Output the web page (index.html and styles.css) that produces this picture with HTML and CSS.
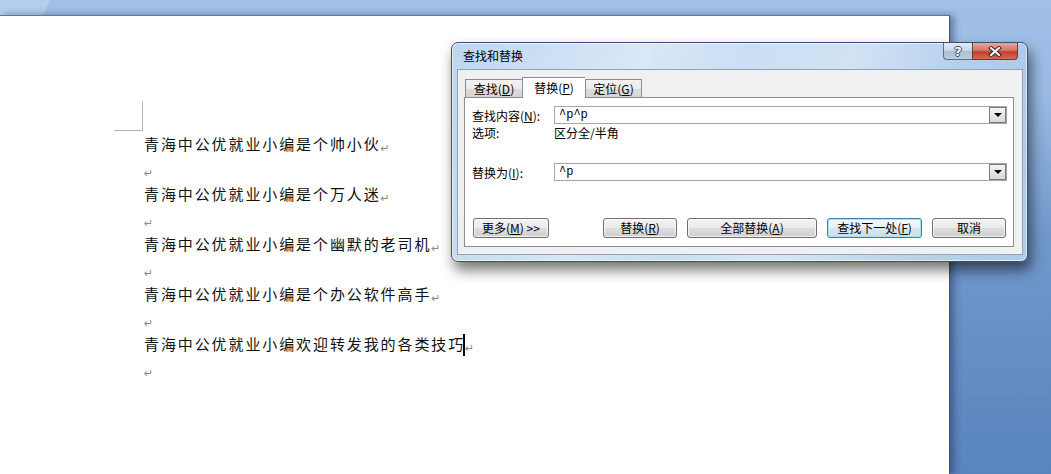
FILE: index.html
```html
<!DOCTYPE html>
<html lang="zh">
<head>
    <meta charset="UTF-8">
    <meta name="viewport" content="width=device-width, initial-scale=1.0">
    <title>查找和替换</title>
    <link rel="stylesheet" href="styles.css">
</head>
<body>
    <div class="page">
        <div class="corner"></div>
        <div class="doc">
            <div class="line">青海中公优就业小编是个帅小伙<span class="mark">↵</span></div>
            <div class="line"><span class="mark">↵</span></div>
            <div class="line">青海中公优就业小编是个万人迷<span class="mark">↵</span></div>
            <div class="line"><span class="mark">↵</span></div>
            <div class="line">青海中公优就业小编是个幽默的老司机<span class="mark">↵</span></div>
            <div class="line"><span class="mark">↵</span></div>
            <div class="line">青海中公优就业小编是个办公软件高手<span class="mark">↵</span></div>
            <div class="line"><span class="mark">↵</span></div>
            <div class="line">青海中公优就业小编欢迎转发我的各类技巧<span class="caret"></span><span class="mark">↵</span></div>
            <div class="line"><span class="mark">↵</span></div>
        </div>
    </div>

    <div class="dialog">
        <div class="titlebar">
            <div class="title">查找和替换</div>
            <div class="caption-btns">
                <div class="cap-btn help">?</div>
                <div class="cap-btn close">
                    <svg width="14" height="11" viewBox="0 0 14 11">
                        <path d="M3 2 L11 9 M11 2 L3 9" stroke="#3b2624" stroke-width="4" stroke-linecap="square"/>
                        <path d="M3 2 L11 9 M11 2 L3 9" stroke="#ffffff" stroke-width="2" stroke-linecap="square"/>
                    </svg>
                </div>
            </div>
        </div>
        <div class="client">
            <div class="tabs">
                <div class="tab">查找(<u>D</u>)</div>
                <div class="tab active">替换(<u>P</u>)</div>
                <div class="tab">定位(<u>G</u>)</div>
            </div>
            <div class="panel">
                <div class="field">
                    <div class="label">查找内容(<u>N</u>):</div>
                    <div class="combo"><span class="combo-text">^p^p</span><span class="drop"></span></div>
                </div>
                <div class="options">
                    <div class="label">选项:</div>
                    <div>区分全/半角</div>
                </div>
                <div class="field second">
                    <div class="label">替换为(<u>I</u>):</div>
                    <div class="combo"><span class="combo-text">^p</span><span class="drop"></span></div>
                </div>
                <div class="buttons">
                    <div class="btn more">更多(<u>M</u>) &gt;&gt;</div>
                    <div class="btn-group">
                        <div class="btn w74">替换(<u>R</u>)</div>
                        <div class="btn w130">全部替换(<u>A</u>)</div>
                        <div class="btn w95 focus">查找下一处(<u>F</u>)</div>
                        <div class="btn w74">取消</div>
                    </div>
                </div>
            </div>
        </div>
    </div>
</body>
</html>
```

FILE: styles.css
```css
body {
    margin: 0;
    width: 1051px;
    height: 474px;
    overflow: hidden;
    position: relative;
    font-family: "Noto Sans CJK SC", sans-serif;
    background:
        linear-gradient(115deg, rgba(255,255,255,0.22) 0, rgba(255,255,255,0.22) 45px, rgba(255,255,255,0) 46px),
        linear-gradient(to bottom, #a1c0e8 0, #9bbbe4 90px, #7299cb 230px, #5a84bd 474px);
}

.page {
    margin-top: 15px;
    width: 950px;
    height: 459px;
    box-sizing: border-box;
    background-color: #fff;
    border-top: 1px solid #66778d;
    border-right: 1px solid #4e5258;
    box-shadow: 4px 0 7px rgba(20,40,80,0.45);
    padding-top: 86px;
}

.corner {
    width: 28px;
    height: 28px;
    margin-left: 114px;
    border-right: 1px solid #b4b4b4;
    border-bottom: 1px solid #b4b4b4;
}

.doc {
    padding-left: 144px;
}

.line {
    height: 25px;
    line-height: 25px;
    font-size: 15px;
    letter-spacing: 1.9px;
    color: #111;
    white-space: nowrap;
}

.mark {
    font-family: "DejaVu Sans", sans-serif;
    font-size: 11px;
    color: #8a8a8a;
    letter-spacing: 0;
    vertical-align: -2px;
}

.caret {
    display: inline-block;
    width: 2px;
    height: 22px;
    background-color: #000;
    vertical-align: -6px;
    margin-left: -2px;
}

/* dialog window */
.dialog {
    position: absolute;
    left: 451px;
    top: 42px;
    width: 577px;
    height: 220px;
    box-sizing: border-box;
    border: 1px solid #3d4e66;
    border-radius: 7px;
    padding: 0 4px 6px 5px;
    display: flex;
    flex-direction: column;
    background:
        linear-gradient(110deg, rgba(255,255,255,0) 0, rgba(255,255,255,0.35) 30%, rgba(255,255,255,0.05) 45%, rgba(255,255,255,0.3) 62%, rgba(255,255,255,0) 80%),
        linear-gradient(to right, #bed6f0 0, #c9ddf3 50%, #aecbea 100%);
    box-shadow: inset 0 0 0 1px rgba(255,255,255,0.6), 3px 8px 14px rgba(0,0,0,0.55);
    font-size: 12px;
    color: #000;
}

.titlebar {
    height: 26px;
    display: flex;
    align-items: flex-start;
}

.title {
    padding-left: 6px;
    line-height: 26px;
    font-size: 12px;
}

.caption-btns {
    margin-left: auto;
    margin-right: 5px;
    display: flex;
}

.cap-btn {
    height: 17px;
    box-sizing: border-box;
    border: 1px solid #5f6f86;
    border-top: none;
    display: flex;
    align-items: center;
    justify-content: center;
}

.help {
    width: 29px;
    border-right: none;
    border-radius: 0 0 0 4px;
    background: linear-gradient(to bottom, #e2ebf6 0, #c9d8ea 45%, #a9bdd6 55%, #bfd0e4 100%);
    color: #fff;
    font-family: "DejaVu Sans", sans-serif;
    font-weight: bold;
    font-size: 13px;
    text-shadow: 1px 0 0 #3a4a5e, -1px 0 0 #3a4a5e, 0 1px 0 #3a4a5e, 0 -1px 0 #3a4a5e;
}

.close {
    width: 46px;
    border-radius: 0 0 4px 0;
    background: linear-gradient(to bottom, #e8a899 0, #d47a68 45%, #c23e27 55%, #d36b57 100%);
    border-color: #6b3a34;
}

.client {
    flex: 1;
    border: 1px solid #8ea3bc;
    background-color: #f0f0f0;
    padding: 7px 8px 7px 6px;
    display: flex;
    flex-direction: column;
}

.tabs {
    height: 20px;
    display: flex;
    align-items: flex-end;
    padding-left: 1px;
}

.tab {
    width: 57px;
    height: 18px;
    box-sizing: border-box;
    border: 1px solid #898c95;
    border-bottom: none;
    border-right: none;
    background: linear-gradient(to bottom, #f3f3f3 0, #ebebeb 50%, #dcdcdc 51%, #d6d6d6 100%);
    text-align: center;
    line-height: 17px;
}

.tab:last-child {
    border-right: 1px solid #898c95;
}

.tab.active {
    width: 63px;
    height: 21px;
    margin-bottom: -1px;
    background: #fff;
    position: relative;
    z-index: 1;
    line-height: 19px;
}

.tab.active + .tab {
    border-left: 1px solid #898c95;
}

u {
    text-decoration: underline;
    text-underline-offset: 1px;
}

.panel {
    height: 150px;
    box-sizing: border-box;
    border: 1px solid #898c95;
    background-color: #fff;
    padding: 8px 6px 8px 7px;
    display: flex;
    flex-direction: column;
}

.field {
    display: flex;
    align-items: center;
    height: 18px;
}

.field.second {
    margin-top: 22px;
}

.label {
    width: 82px;
    flex-shrink: 0;
}

.combo {
    flex: 1;
    height: 18px;
    box-sizing: border-box;
    border: 1px solid #a4a6ab;
    display: flex;
    align-items: center;
}

.combo-text {
    padding-left: 4px;
    font-family: "Liberation Mono", monospace;
    font-size: 12px;
}

.drop {
    margin-left: auto;
    width: 17px;
    height: 16px;
    box-sizing: border-box;
    border: 1px solid #7a7a7a;
    background: linear-gradient(to bottom, #f4f4f4 0, #e6e6e6 50%, #d8d8d8 100%);
    position: relative;
}

.drop::after {
    content: "";
    position: absolute;
    left: 4px;
    top: 5px;
    border-left: 4px solid transparent;
    border-right: 4px solid transparent;
    border-top: 4px solid #000;
}

.options {
    display: flex;
    height: 16px;
    line-height: 16px;
    margin-top: 1px;
}

.buttons {
    margin-top: auto;
    display: flex;
    padding-left: 1px;
    padding-right: 1px;
}

.btn-group {
    margin-left: auto;
    display: flex;
    gap: 10px;
}

.btn {
    height: 20px;
    box-sizing: border-box;
    border: 1px solid #707070;
    border-radius: 3px;
    background: linear-gradient(to bottom, #f2f2f2 0, #ebebeb 50%, #dddddd 51%, #cfcfcf 100%);
    box-shadow: inset 0 0 0 1px rgba(255,255,255,0.7);
    text-align: center;
    line-height: 18px;
    white-space: nowrap;
}

.more {
    width: 76px;
}

.w74 {
    width: 74px;
}

.w95 {
    width: 95px;
}

.w130 {
    width: 130px;
}

.btn.focus {
    border-color: #3c7fb1;
    box-shadow: inset 0 0 0 1px #a8e2f9;
    background: linear-gradient(to bottom, #f3f8fb 0, #e8f1f7 50%, #d8e6ef 51%, #cfdde8 100%);
}
```
